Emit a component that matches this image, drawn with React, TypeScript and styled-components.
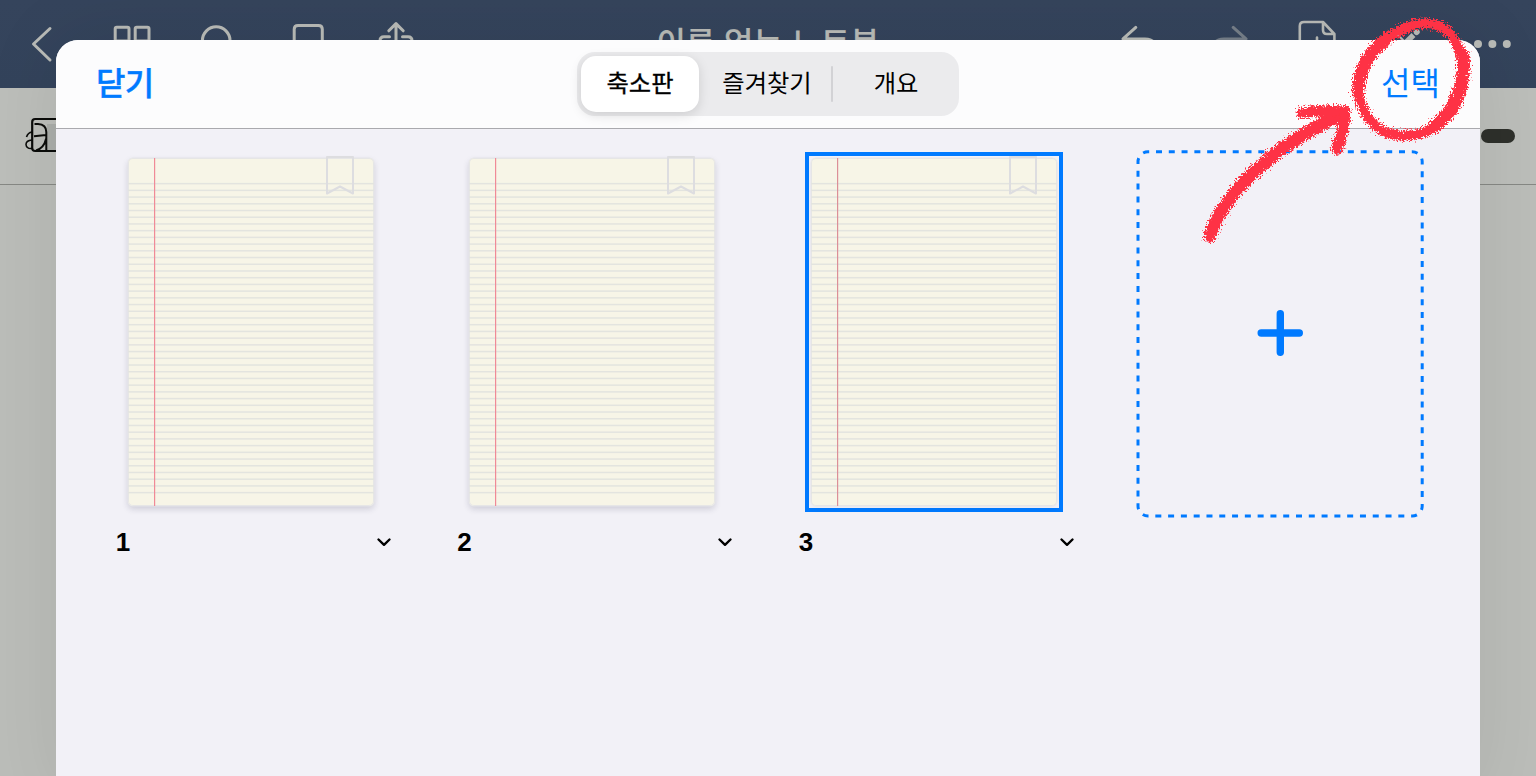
import React from 'react';
import styled, { createGlobalStyle } from 'styled-components';

const BLUE = '#007aff';
const RED = '#fe3344';
const ICON = '#b9bbb7';

const GlobalStyle = createGlobalStyle`
  * {
    box-sizing: border-box;
  }

  body {
    margin: 0;
    overflow: hidden;
    font-family: 'Liberation Sans', 'Noto Sans CJK KR', sans-serif;
  }
`;

const Screen = styled.div`
  position: relative;
  display: flex;
  flex-direction: column;
  width: 1536px;
  height: 776px;
  overflow: hidden;
  background: #bbbdb9;
`;

const NavBar = styled.header`
  display: flex;
  justify-content: space-between;
  align-items: center;
  height: 88px;
  background: linear-gradient(#35445c, #33435b);
`;

const NavGroup = styled.div`
  display: flex;
`;

const NavIcon = styled.svg<{ $dimmed?: boolean }>`
  display: block;
  width: 88px;
  height: 88px;
  fill: none;
  stroke: ${ICON};
  stroke-width: 3;
  stroke-linecap: round;
  stroke-linejoin: round;
  opacity: ${({ $dimmed }) => ($dimmed ? 0.5 : 1)};
`;

const NotebookTitle = styled.h1`
  margin: 0;
  font-size: 32px;
  font-weight: 500;
  line-height: 48px;
  letter-spacing: -0.1px;
  color: ${ICON};
  -webkit-text-stroke: 0.2px ${ICON};
`;

const ToolBar = styled.div`
  display: flex;
  justify-content: space-between;
  align-items: center;
  height: 97px;
  border-bottom: 1px solid #868884;
  background: #bcbeba;
`;

const LetterIcon = styled.svg`
  display: block;
  width: 72px;
  height: 96px;
  fill: none;
  stroke: #0b0c0a;
`;

const PenSize = styled.span`
  width: 34px;
  height: 14px;
  margin-right: 21px;
  border-radius: 7px;
  background: #2e302b;
`;

const Sheet = styled.section`
  position: absolute;
  top: 40px;
  left: 56px;
  display: flex;
  flex-direction: column;
  width: 1424px;
  height: 760px;
  overflow: hidden;
  border-radius: 22px;
  background: #f2f1f7;
`;

const SheetShadow = styled.div`
  position: absolute;
  top: 40px;
  left: 56px;
  width: 1424px;
  height: 760px;
  border-radius: 22px;
  box-shadow: 0 0 80px rgba(0, 0, 0, 0.08);
`;

const SheetHeader = styled.div`
  display: grid;
  grid-template-columns: 1fr auto 1fr;
  align-items: center;
  height: 89px;
  padding: 0 40px;
  border-bottom: 1px solid #a9a9ae;
  background: #fcfcfd;
`;

const HeaderButton = styled.button<{ $strong?: boolean }>`
  justify-self: ${({ $strong }) => ($strong ? 'start' : 'end')};
  padding: 0;
  border: 0;
  background: none;
  font-family: inherit;
  font-size: 32px;
  font-weight: ${({ $strong }) => ($strong ? 500 : 400)};
  line-height: 48px;
  letter-spacing: ${({ $strong }) => ($strong ? '-0.8px' : '0')};
  color: ${BLUE};
  -webkit-text-stroke: ${({ $strong }) => ($strong ? 0.4 : 0)}px ${BLUE};
`;

const Segments = styled.div`
  display: flex;
  align-items: center;
  width: 382px;
  height: 64px;
  padding: 4px;
  border-radius: 18px;
  background: #ebebed;
`;

const Segment = styled.div<{ $width: number; $active?: boolean }>`
  display: flex;
  justify-content: center;
  align-items: center;
  width: ${({ $width }) => $width}px;
  height: 56px;
  padding: 0 0 6px ${({ $active }) => ($active ? 0 : 4)}px;
  border-radius: 15px;
  background: ${({ $active }) => ($active ? '#fff' : 'transparent')};
  box-shadow: ${({ $active }) => ($active ? '0 3px 12px rgba(0, 0, 0, 0.13)' : 'none')};
  font-size: 24.3px;
  color: #000;
  -webkit-text-stroke: ${({ $active }) => ($active ? 0.3 : 0)}px #000;
`;

const SegmentDivider = styled.span`
  width: 2px;
  height: 36px;
  border-radius: 1px;
  background: #d2d2d5;
`;

const Pages = styled.div`
  display: grid;
  grid-template-columns: repeat(4, 341.5px);
  padding: 23px 0 0 24px;
`;

const PageCell = styled.div`
  display: flex;
  flex-direction: column;
  align-items: center;
`;

const Frame = styled.div<{ $selected?: boolean }>`
  width: 258px;
  height: 360px;
  padding: 2px;
  border: 4px solid ${({ $selected }) => ($selected ? BLUE : 'transparent')};
`;

const Paper = styled.div<{ $selected?: boolean }>`
  position: relative;
  width: 246px;
  height: 348px;
  border-radius: 5px;
  background: #f7f5e7;
  box-shadow:
    inset 0 0 0 1px #e6e6e6,
    0 0 0 0.5px #e6e6e9,
    0 3px 6px rgba(40, 40, 70, ${({ $selected }) => ($selected ? 0.04 : 0.18)});
`;

const Ruling = styled.svg`
  display: block;
  width: 246px;
  height: 348px;
`;

const Ribbon = styled.svg`
  position: absolute;
  top: -3px;
  right: 19px;
  width: 30px;
  height: 42px;
  fill: none;
  stroke: #dddde0;
  stroke-width: 2;
  stroke-linejoin: round;
`;

const PageFooter = styled.div`
  display: flex;
  justify-content: space-between;
  align-items: center;
  width: 276px;
  height: 30px;
  margin: 15px 0 0 6px;
  font-size: 26px;
  font-weight: 700;
  color: #000;
`;

const Chevron = styled.svg`
  width: 16px;
  height: 12px;
  fill: none;
  stroke: #000;
  stroke-width: 2.4;
  stroke-linecap: round;
  stroke-linejoin: round;
`;

const AddPage = styled.svg`
  display: block;
  width: 288px;
  height: 368px;
  margin: -2px 0 0 9px;
  fill: none;
  stroke: ${BLUE};
`;

const Annotation = styled.svg`
  position: absolute;
  top: 0;
  left: 1180px;
  width: 320px;
  height: 260px;
  fill: none;
  stroke: ${RED};
  stroke-linecap: round;
  stroke-linejoin: round;
  pointer-events: none;
`;

const RULES = Array.from({ length: 47 }, (_, i) => 24.9 + i * 6.717);

interface PageProps {
  number: number;
  selected?: boolean;
}

function Page({ number, selected }: PageProps) {
  return (
    <PageCell>
      <Frame $selected={selected}>
        <Paper $selected={selected}>
          <Ruling viewBox="0 0 246 348">
            {RULES.map((y) => (
              <rect key={y} x="0" y={y} width="246" height="1.5" fill="#e3e4df" />
            ))}
            <rect x="26" y="0" width="1.2" height="348" fill={selected ? '#dc8f98' : '#f08a97'} />
          </Ruling>
          <Ribbon viewBox="0 0 30 42">
            <path d="M2 2H28V38.5L15 31.5L2 38.5Z" />
          </Ribbon>
        </Paper>
      </Frame>
      <PageFooter>
        <span>{number}</span>
        <Chevron viewBox="0 0 16 12">
          <path d="M2.5 3.5L8 8.8L13.5 3.5" />
        </Chevron>
      </PageFooter>
    </PageCell>
  );
}

function LeftIcons() {
  return (
    <NavGroup>
      <NavIcon viewBox="0 0 88 88">
        <path d="M50 28.5L33.5 44L50 60" />
      </NavIcon>
      <NavIcon viewBox="0 0 88 88">
        <rect x="27.2" y="27.2" width="13.8" height="13.8" rx="1.6" />
        <rect x="47.2" y="27.2" width="13.8" height="13.8" rx="1.6" />
        <rect x="27.2" y="47.2" width="13.8" height="13.8" rx="1.6" />
        <rect x="47.2" y="47.2" width="13.8" height="13.8" rx="1.6" />
      </NavIcon>
      <NavIcon viewBox="0 0 88 88">
        <circle cx="40.2" cy="40.6" r="13.8" />
        <path d="M50 50L60 60" />
      </NavIcon>
      <NavIcon viewBox="0 0 88 88">
        <path d="M30.2 62V29.3Q30.2 25.4 34.1 25.4H54.4Q58.3 25.4 58.3 29.3V62L44 52Z" />
      </NavIcon>
      <NavIcon viewBox="0 0 88 88">
        <path d="M44 50V23.6M36.8 30.8L44 23.6L51.2 30.8M37.5 36.7H32Q28 36.7 28 40.7V58Q28 62 32 62H56Q60 62 60 58V40.7Q60 36.7 56 36.7H50.5" />
      </NavIcon>
    </NavGroup>
  );
}

function RightIcons() {
  return (
    <NavGroup>
      <NavIcon viewBox="0 0 88 88">
        <path d="M39.8 27.4L27 38.9L39.8 50.4M27 38.9H49Q61 38.9 61 53" />
      </NavIcon>
      <NavIcon viewBox="0 0 88 88" $dimmed>
        <path d="M49.2 27.4L62 38.9L49.2 50.4M62 38.9H40Q28 38.9 28 53" />
      </NavIcon>
      <NavIcon viewBox="0 0 88 88">
        <path
          d="M32 64Q27.8 64 27.8 60V26Q27.8 22 32 22H51L62.4 34V60Q62.4 64 58 64ZM51 22V30Q51 34 55 34H62.4M45 37.5V55M36 46H54"
          strokeWidth="2.6"
        />
      </NavIcon>
      <NavIcon viewBox="0 0 88 88">
        <path d="M35 32L60 57" strokeWidth="2" />
        <path d="M57 32L56.6 32.4" strokeWidth="5.5" />
        <path d="M53.5 35L40 48.5" strokeWidth="5.5" strokeLinecap="butt" />
      </NavIcon>
      <NavIcon viewBox="0 0 88 88">
        <g fill={ICON} stroke="none">
          <circle cx="30" cy="44" r="4" />
          <circle cx="44.4" cy="44" r="4" />
          <circle cx="58.8" cy="44" r="4" />
        </g>
      </NavIcon>
    </NavGroup>
  );
}

function HandDrawnArrow() {
  return (
    <Annotation viewBox="1180 0 320 260">
      <defs>
        <filter id="crayon" x="-10%" y="-10%" width="120%" height="120%">
          <feTurbulence type="fractalNoise" baseFrequency="0.6" numOctaves="2" seed="4" result="noise" />
          <feDisplacementMap in="SourceGraphic" in2="noise" scale="11" xChannelSelector="R" yChannelSelector="G" />
        </filter>
      </defs>
      <g filter="url(#crayon)">
        <path d="M1210 236C1216 216 1230 197 1246 180C1268 157 1296 135 1343 114" strokeWidth="13" />
        <path d="M1302 113C1314 111 1330 110 1345 111" strokeWidth="11" />
        <path d="M1345 113C1345 124 1341 137 1337 149" strokeWidth="11.5" />
        <path
          d="M1397 32C1420 19 1440 21 1451 35C1462 49 1465 67 1462 87C1458 108 1446 121 1431 129C1416 138 1396 137 1383 131C1369 123 1362 110 1358 94C1355 75 1365 56 1380 44C1387 38 1396 32 1409 27"
          strokeWidth="10"
        />
        <path d="M1463 55C1466 82 1457 108 1434 127" strokeWidth="13" />
        <path d="M1358 92C1359 71 1367 54 1386 39" strokeWidth="12.5" />
      </g>
    </Annotation>
  );
}

function App() {
  return (
    <Screen>
      <GlobalStyle />
      <NavBar>
        <LeftIcons />
        <NotebookTitle>이름 없는 노트북</NotebookTitle>
        <RightIcons />
      </NavBar>
      <ToolBar>
        <LetterIcon viewBox="0 88 72 96">
          <path d="M47 124H60V150H47Z" fill="#abaeaa" stroke="none" />
          <path d="M60 119H35.2Q32.2 119 32.2 122V148Q32.2 151 35.2 151H60" strokeWidth="2.2" />
          <path d="M34.5 124H38Q46.3 124.5 46.3 132V151M34 136.3L46 135M46 139Q44 148 36 150.5" strokeWidth="2" />
          <path d="M26.5 137Q28 132.5 32 132M32 140Q26 140.5 26 144.5Q26.5 149 32 148.5" strokeWidth="1.6" />
        </LetterIcon>
        <PenSize />
      </ToolBar>

      <SheetShadow />
      <Sheet>
        <SheetHeader>
          <HeaderButton $strong>닫기</HeaderButton>
          <Segments>
            <Segment $width={118} $active>
              축소판
            </Segment>
            <Segment $width={132}>즐겨찾기</Segment>
            <SegmentDivider />
            <Segment $width={122}>개요</Segment>
          </Segments>
          <HeaderButton>선택</HeaderButton>
        </SheetHeader>
        <Pages>
          <Page number={1} />
          <Page number={2} />
          <Page number={3} selected />
          <PageCell>
            <AddPage viewBox="1136 150 288 368">
              <rect
                x="1138"
                y="151.8"
                width="284.2"
                height="364.2"
                rx="10"
                strokeWidth="3"
                strokeDasharray="6 6.79"
                strokeDashoffset="4.8"
              />
              <path d="M1261.2 333H1299.3M1280.3 313.8V352.3" strokeWidth="7.4" strokeLinecap="round" />
            </AddPage>
          </PageCell>
        </Pages>
      </Sheet>
      <HandDrawnArrow />
    </Screen>
  );
}

export default App;
